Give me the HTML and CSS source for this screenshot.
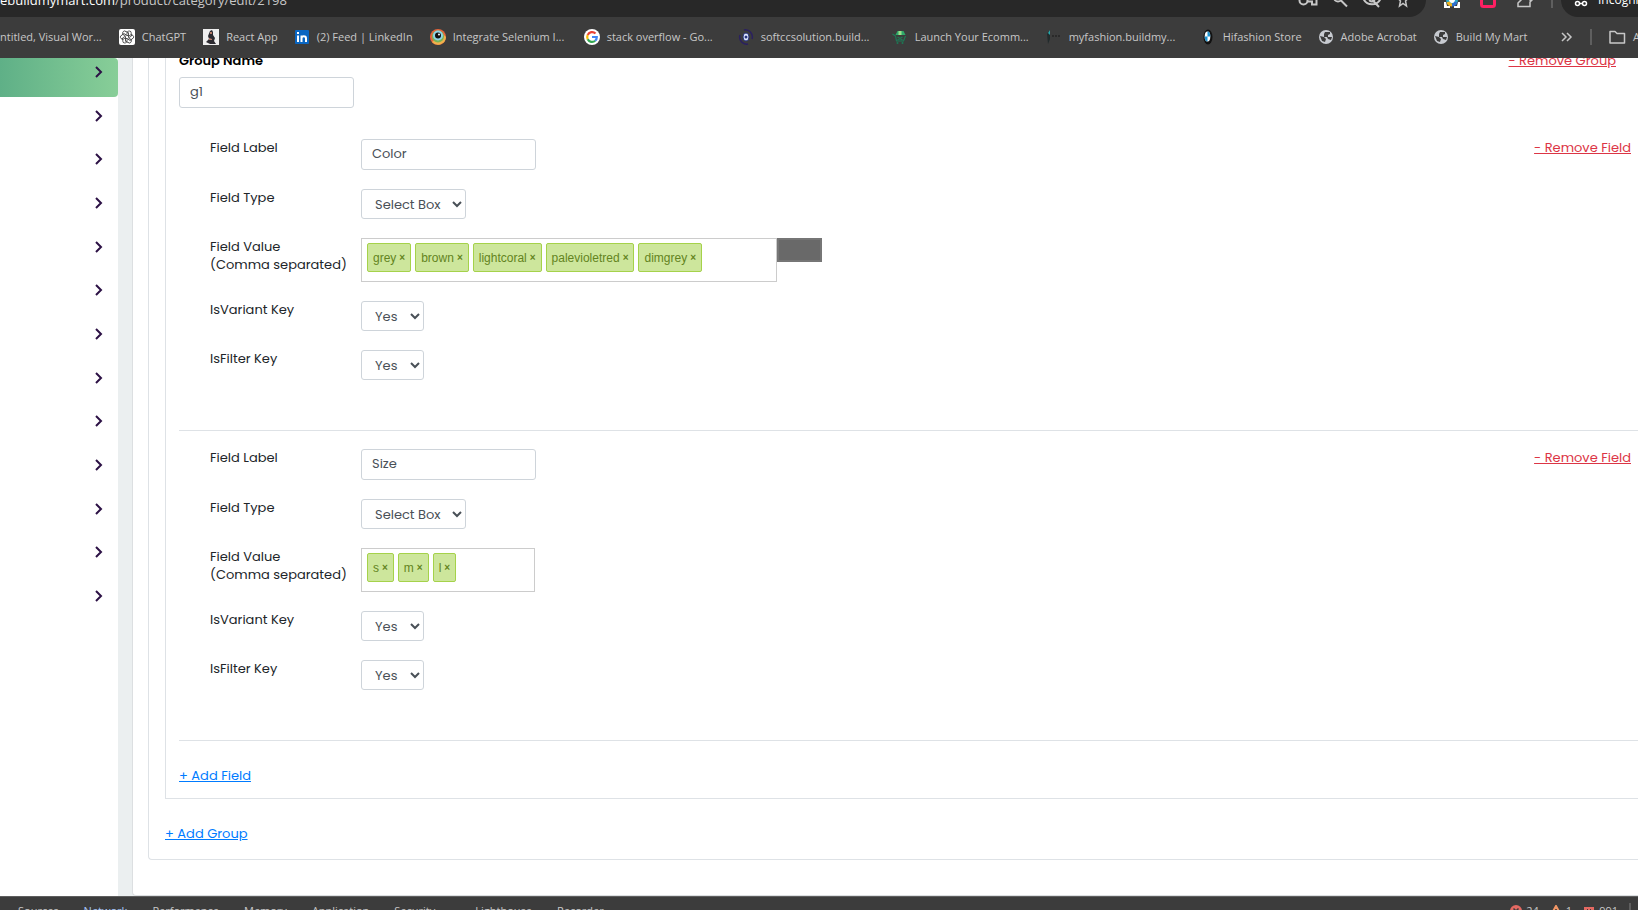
FILE: index.html
```
<!DOCTYPE html>
<html lang="en">
<head>
    <meta charset="UTF-8">
    <meta name="viewport" content="width=device-width, initial-scale=1.0">
    <title>Edit Category</title>
    <link rel="stylesheet" href="styles.css">
</head>
<body>
    <!-- Address bar -->
    <div class="toolbar">
        <div class="omnibox">
            <span class="url"><b>ebuildmymart.com</b>/product/category/edit/2198</span>
            <div class="omnibox-icons">
                <svg width="20" height="16" viewBox="0 0 20 16"><g fill="none" stroke="#c7c7c7" stroke-width="2"><circle cx="5.500" cy="8.500" r="4"/><path d="M9 6.500h9.500v6H14v-3H9"/></g></svg>
                <svg width="16" height="16" viewBox="0 0 16 16"><g fill="none" stroke="#c7c7c7" stroke-width="2"><circle cx="6" cy="5.500" r="4"/><path d="M9 8.500l6 6"/></g></svg>
                <svg width="20" height="16" viewBox="0 0 20 16"><g fill="none" stroke="#c7c7c7" stroke-width="2"><path d="M1.500 7C5 1 15 1 18.500 7 15 14 5 14 1.500 7zM3 0l14 15"/><circle cx="10" cy="7" r="2.500"/></g></svg>
                <svg width="14" height="16" viewBox="0 0 14 16"><path d="M7 2l1.500 4h4L9.500 9l1 5L7 11.500 3.500 14l1-5-3-3h4z" fill="none" stroke="#c7c7c7" stroke-width="1.500"/></svg>
            </div>
        </div>
        <div class="extensions">
            <svg width="16" height="16" viewBox="0 0 16 16"><path d="M0 10v6h6v-2H3l-1-4zM16 10v6h-6v-2h3l1-4z" fill="#fff"/><circle cx="8" cy="8" r="4.500" fill="#fff" stroke="#2aa9c9" stroke-width="3"/><path d="M4 10a4.500 4.500 0 0 0 4 3" fill="none" stroke="#f2b51d" stroke-width="3"/><path d="M8 13a4.500 4.500 0 0 0 4-3" fill="none" stroke="#2f6fd0" stroke-width="3"/></svg>
            <svg width="16" height="16" viewBox="0 0 16 16"><rect x="1.500" y="1.500" width="13" height="13" rx="2" fill="#3c3c3c" stroke="#ff1f63" stroke-width="3"/></svg>
            <svg width="18" height="16" viewBox="0 0 18 16"><path d="M2 14.500V11l3-3-2-4h11v4h2l-2 2v4.500z" fill="none" stroke="#c7c7c7" stroke-width="1.500"/></svg>
            <span class="divider"></span>
        </div>
        <div class="incognito">
            <svg width="14" height="16" viewBox="0 0 14 16"><g fill="none" stroke="#fff" stroke-width="1.500"><circle cx="3.500" cy="11.500" r="2"/><circle cx="10.500" cy="11.500" r="2"/><path d="M5.500 11.500h3M1 6h12"/></g></svg>
            <span>Incognito</span>
        </div>
    </div>

    <!-- Bookmarks -->
    <nav class="bookmarks">
        <a href="#">ntitled, Visual Wor...</a>
        <a href="#">
            <svg width="16" height="16" viewBox="0 0 16 16"><rect width="16" height="16" rx="2" fill="#fff"/><g fill="none" stroke="#333" stroke-width="0.800"><path d="M8 5.500V3.800a2.300 2.300 0 0 1 4-1L12.500 7 8.500 9.500" transform="rotate(0 8 8)"/><path d="M8 5.500V3.800a2.300 2.300 0 0 1 4-1L12.500 7 8.500 9.500" transform="rotate(60 8 8)"/><path d="M8 5.500V3.800a2.300 2.300 0 0 1 4-1L12.500 7 8.500 9.500" transform="rotate(120 8 8)"/><path d="M8 5.500V3.800a2.300 2.300 0 0 1 4-1L12.500 7 8.500 9.500" transform="rotate(180 8 8)"/><path d="M8 5.500V3.800a2.300 2.300 0 0 1 4-1L12.500 7 8.500 9.500" transform="rotate(240 8 8)"/><path d="M8 5.500V3.800a2.300 2.300 0 0 1 4-1L12.500 7 8.500 9.500" transform="rotate(300 8 8)"/></g></svg>
            <span>ChatGPT</span>
        </a>
        <a href="#">
            <svg width="16" height="16" viewBox="0 0 16 16"><path fill="#eee" d="M0 0h16v16H0z"/><path d="M7 2l2-1 1 2v3l2 3-1 3 2 3H7l-4-2 3-3-1-3z" fill="#2c2a30"/><path d="M7 3h2v2H7zM6 9l3 1v1H6z" fill="#b57b68"/></svg>
            <span>React App</span>
        </a>
        <a href="#">
            <svg width="15" height="16" viewBox="0 0 15 16"><rect y="1" width="14" height="14" rx="1" fill="#0a66c2"/><path d="M3 6.500V13M3 3v2M6.500 6.500V13M6.500 9.500c0-3 4.500-3 4.500 0V13" fill="none" stroke="#fff" stroke-width="2"/></svg>
            <span>(2) Feed | LinkedIn</span>
        </a>
        <a class="long" href="#">
            <svg width="16" height="16" viewBox="0 0 16 16"><circle cx="8" cy="8" r="8" fill="#e5643a"/><path d="M2 13a8 8 0 0 0 14-5l-4-4z" fill="#efb04c"/><circle cx="8" cy="7.500" r="6" fill="#78b356"/><circle cx="8" cy="6.500" r="5" fill="#8ed3e6"/><circle cx="8" cy="6.500" r="3" fill="#111"/><circle cx="9" cy="5.500" r="1" fill="#fff"/></svg>
            <span>Integrate Selenium I...</span>
        </a>
        <a class="long" href="#">
            <svg width="16" height="16" viewBox="0 0 16 16"><circle cx="8" cy="8" r="8" fill="#fff"/><g fill="none" stroke-width="2.200"><path d="M11.500 4.500A4.800 4.800 0 0 0 3.700 6" stroke="#ea4335"/><path d="M3.700 6a4.800 4.800 0 0 0 0 4.200" stroke="#fbbc05"/><path d="M3.700 10.200a4.800 4.800 0 0 0 7.500 1.500" stroke="#34a853"/><path d="M11.200 11.700A4.800 4.800 0 0 0 12.800 8H8" stroke="#4285f4"/></g></svg>
            <span>stack overflow - Go...</span>
        </a>
        <a class="long" href="#">
            <svg width="16" height="16" viewBox="0 0 16 16"><path d="M6 1a7 7 0 0 1 8 9M10 15a7 7 0 0 1-8-9" fill="none" stroke="#2a2060" stroke-width="1.500"/><ellipse cx="8" cy="8" rx="3" ry="4" fill="#dfe8ff" stroke="#28337c"/><circle cx="8" cy="8" r="1.500" fill="#28337c"/></svg>
            <span>softccsolution.build...</span>
        </a>
        <a class="long" href="#">
            <svg width="16" height="16" viewBox="0 0 15 16"><path d="M3 6l2-4h6l2 4z" fill="#2fa86a"/><path d="M6 2h3v4H6z" fill="#9be08a"/><path d="M0 5l3 2 1 5h7l2-5M5 8l5 3M10 8l-5 3" fill="none" stroke="#1d7a56" stroke-width="1.200"/><circle cx="5" cy="14" r="1" fill="#1d7a56"/><circle cx="10" cy="14" r="1" fill="#1d7a56"/></svg>
            <span>Launch Your Ecomm...</span>
        </a>
        <a class="long" href="#">
            <svg width="16" height="16" viewBox="0 0 16 16"><path d="M1 5l3-4v9l-2 5z" fill="#222b2c"/><path d="M2 4l2-3v5z" fill="#26a9ad"/><path d="M6 7h9" stroke="#2a2a2a" stroke-width="2" stroke-dasharray="2 1"/></svg>
            <span>myfashion.buildmy...</span>
        </a>
        <a href="#">
            <svg width="16" height="16" viewBox="0 0 16 16"><ellipse cx="8" cy="8" rx="4.500" ry="7.500" fill="#111"/><ellipse cx="7.500" cy="7.500" rx="2.800" ry="5" fill="#fff"/><path d="M7.500 2.500a2.800 5 0 0 1 2.800 5H7.500zM7.500 12.500a2.800 5 0 0 1-2.800-5h2.800z" fill="#1c92cf"/></svg>
            <span>Hifashion Store</span>
        </a>
        <a href="#">
            <svg width="15" height="16" viewBox="0 0 15 16"><circle cx="7" cy="8" r="7" fill="#c7cad0"/><path d="M1 7l4 1 2 2-1 3-3-1zM6 3h5v2l-2 1v2h4l-1 3-3-1-1-2H5V5z" fill="#3c3c3c"/></svg>
            <span>Adobe Acrobat</span>
        </a>
        <a href="#">
            <svg width="15" height="16" viewBox="0 0 15 16"><circle cx="7" cy="8" r="7" fill="#c7cad0"/><path d="M1 7l4 1 2 2-1 3-3-1zM6 3h5v2l-2 1v2h4l-1 3-3-1-1-2H5V5z" fill="#3c3c3c"/></svg>
            <span>Build My Mart</span>
        </a>
        <div class="bookmarks-end">
            <button class="more" type="button" aria-label="More bookmarks">
                <svg width="12" height="12" viewBox="0 0 12 12"><path d="M1 2l4 4-4 4M6 2l4 4-4 4" fill="none" stroke="#c7c7c7" stroke-width="1.500"/></svg>
            </button>
            <span class="divider"></span>
            <a href="#">
                <svg width="17" height="16" viewBox="0 0 17 16"><path d="M1 2.500h5l2 2h7.500v9.500H1z" fill="none" stroke="#c7c7c7" stroke-width="1.500" stroke-linejoin="round"/></svg>
                <span>All Bookmarks</span>
            </a>
        </div>
    </nav>

    <div class="page">
        <!-- Sidebar, only the arrows are in view -->
        <nav class="sidebar">
            <ul>
                <li><a class="active" href="#" aria-label="Expand menu"><svg class="arrow" viewBox="0 0 8 12"><path d="M1 1l5 5-5 5"/></svg></a></li>
                <li><a href="#" aria-label="Expand menu"><svg class="arrow" viewBox="0 0 8 12"><path d="M1 1l5 5-5 5"/></svg></a></li>
                <li><a href="#" aria-label="Expand menu"><svg class="arrow" viewBox="0 0 8 12"><path d="M1 1l5 5-5 5"/></svg></a></li>
                <li><a href="#" aria-label="Expand menu"><svg class="arrow" viewBox="0 0 8 12"><path d="M1 1l5 5-5 5"/></svg></a></li>
                <li><a href="#" aria-label="Expand menu"><svg class="arrow" viewBox="0 0 8 12"><path d="M1 1l5 5-5 5"/></svg></a></li>
                <li><a href="#" aria-label="Expand menu"><svg class="arrow" viewBox="0 0 8 12"><path d="M1 1l5 5-5 5"/></svg></a></li>
                <li><a href="#" aria-label="Expand menu"><svg class="arrow" viewBox="0 0 8 12"><path d="M1 1l5 5-5 5"/></svg></a></li>
                <li><a href="#" aria-label="Expand menu"><svg class="arrow" viewBox="0 0 8 12"><path d="M1 1l5 5-5 5"/></svg></a></li>
                <li><a href="#" aria-label="Expand menu"><svg class="arrow" viewBox="0 0 8 12"><path d="M1 1l5 5-5 5"/></svg></a></li>
                <li><a href="#" aria-label="Expand menu"><svg class="arrow" viewBox="0 0 8 12"><path d="M1 1l5 5-5 5"/></svg></a></li>
                <li><a href="#" aria-label="Expand menu"><svg class="arrow" viewBox="0 0 8 12"><path d="M1 1l5 5-5 5"/></svg></a></li>
                <li><a href="#" aria-label="Expand menu"><svg class="arrow" viewBox="0 0 8 12"><path d="M1 1l5 5-5 5"/></svg></a></li>
                <li><a href="#" aria-label="Expand menu"><svg class="arrow" viewBox="0 0 8 12"><path d="M1 1l5 5-5 5"/></svg></a></li>
            </ul>
        </nav>

        <main class="card">
            <form class="groups">
                <section class="group">
                    <div class="group-head">
                        <label for="groupName">Group Name</label>
                        <a class="remove" href="#">- Remove Group</a>
                    </div>
                    <input class="form-control" type="text" id="groupName" value="g1">

                    <div class="fields">
                        <div class="field">
                            <div class="field-rows">
                                <div class="row">
                                    <label for="label1">Field Label</label>
                                    <input class="form-control" type="text" id="label1" value="Color">
                                </div>
                                <div class="row">
                                    <label for="type1">Field Type</label>
                                    <select class="form-control type-select" id="type1"><option>Select Box</option></select>
                                </div>
                                <div class="row">
                                    <label for="value1">Field Value<br>(Comma separated)</label>
                                    <div class="tags wide">
                                        <span class="tag">grey<button type="button" aria-label="Remove grey">×</button></span>
                                        <span class="tag">brown<button type="button" aria-label="Remove brown">×</button></span>
                                        <span class="tag">lightcoral<button type="button" aria-label="Remove lightcoral">×</button></span>
                                        <span class="tag">palevioletred<button type="button" aria-label="Remove palevioletred">×</button></span>
                                        <span class="tag">dimgrey<button type="button" aria-label="Remove dimgrey">×</button></span>
                                        <input type="text" id="value1">
                                    </div>
                                    <input class="color-box" type="text" aria-label="Picked color" readonly>
                                </div>
                                <div class="row">
                                    <label for="variant1">IsVariant Key</label>
                                    <select class="form-control yes-select" id="variant1"><option>Yes</option><option>No</option></select>
                                </div>
                                <div class="row">
                                    <label for="filter1">IsFilter Key</label>
                                    <select class="form-control yes-select" id="filter1"><option>Yes</option><option>No</option></select>
                                </div>
                            </div>
                            <a class="remove" href="#">- Remove Field</a>
                        </div>

                        <div class="field">
                            <div class="field-rows">
                                <div class="row">
                                    <label for="label2">Field Label</label>
                                    <input class="form-control" type="text" id="label2" value="Size">
                                </div>
                                <div class="row">
                                    <label for="type2">Field Type</label>
                                    <select class="form-control type-select" id="type2"><option>Select Box</option></select>
                                </div>
                                <div class="row">
                                    <label for="value2">Field Value<br>(Comma separated)</label>
                                    <div class="tags">
                                        <span class="tag">s<button type="button" aria-label="Remove s">×</button></span>
                                        <span class="tag">m<button type="button" aria-label="Remove m">×</button></span>
                                        <span class="tag">l<button type="button" aria-label="Remove l">×</button></span>
                                        <input type="text" id="value2">
                                    </div>
                                </div>
                                <div class="row">
                                    <label for="variant2">IsVariant Key</label>
                                    <select class="form-control yes-select" id="variant2"><option>Yes</option><option>No</option></select>
                                </div>
                                <div class="row">
                                    <label for="filter2">IsFilter Key</label>
                                    <select class="form-control yes-select" id="filter2"><option>Yes</option><option>No</option></select>
                                </div>
                            </div>
                            <a class="remove" href="#">- Remove Field</a>
                        </div>
                    </div>
                    <a class="add" href="#">+ Add Field</a>
                </section>
                <a class="add" href="#">+ Add Group</a>
            </form>
        </main>
    </div>

    <!-- Devtools tabs -->
    <div class="devtools">
        <div class="tabs">
            <a href="#">Sources</a>
            <a class="current" href="#">Network</a>
            <a href="#">Performance</a>
            <a href="#">Memory</a>
            <a href="#">Application</a>
            <a class="wide-tab" href="#">Security</a>
            <a href="#">Lighthouse</a>
            <a href="#">Recorder</a>
        </div>
        <div class="counts">
            <span><svg width="12" height="12" viewBox="0 0 12 12"><circle cx="6" cy="6" r="6" fill="#e46962"/><path d="M3.500 3.500l5 5M8.500 3.500l-5 5" stroke="#3c3c3c" stroke-width="1.500"/></svg>24</span>
            <span><svg width="12" height="12" viewBox="0 0 12 12"><path d="M6 1l5 9H1z" fill="none" stroke="#f29766" stroke-width="2"/></svg>1</span>
            <span><svg width="12" height="12" viewBox="0 0 12 12"><path d="M1 2h10v8H5l-4 2z" fill="#e46962"/><path d="M4 4l4 4M8 4L4 8" stroke="#3c3c3c"/></svg>991</span>
            <span class="divider"></span>
        </div>
    </div>
</body>
</html>
```

FILE: styles.css
```
* {
    margin: 0;
    padding: 0;
    box-sizing: border-box;
}

body {
    display: flex;
    flex-direction: column;
    height: 100vh;
    overflow: hidden;
    background: #3c3c3c;
    font-family: Poppins, Inter, sans-serif;
    font-size: 13px;
    line-height: 18px;
    color: #212529;
}

svg {
    flex: none;
}

.divider {
    flex: none;
    width: 2px;
    height: 16px;
    background: #5f5f5f;
}

/* Browser bars */
.toolbar,
.bookmarks,
.devtools {
    display: flex;
    flex: none;
    align-items: center;
    font-family: "Segoe UI", "Open Sans", sans-serif;
    font-size: 11px;
    color: #c7c7c7;
    white-space: nowrap;
    overflow: hidden;
}

/* upper half is scrolled off the top */
.toolbar {
    height: 34px;
    margin-top: -17px;
}

.omnibox {
    display: flex;
    flex: 1;
    align-items: center;
    justify-content: space-between;
    height: 34px;
    padding-right: 16px;
    border-radius: 0 17px 17px 0;
    background: #282828;
    font-size: 13px;
}

.omnibox b {
    font-weight: normal;
    color: #fff;
}

.omnibox-icons {
    display: flex;
    gap: 14px;
}

.extensions {
    display: flex;
    align-items: center;
    gap: 20px;
    padding: 0 8px 0 18px;
}

.extensions .divider {
    margin-left: -3px;
}

.incognito {
    display: flex;
    align-items: center;
    gap: 10px;
    width: 77px;
    height: 34px;
    padding-left: 13px;
    border-radius: 17px 0 0 17px;
    background: #282828;
    font-size: 12px;
    color: #fff;
    overflow: hidden;
}

.bookmarks {
    height: 41px;
    padding-bottom: 2px;
    gap: 17px;
}

.bookmarks a {
    display: flex;
    flex: none;
    align-items: center;
    gap: 7px;
    color: #c7c7c7;
    text-decoration: none;
}

/* long titles are all cut to the same width */
.bookmarks .long {
    width: 137px;
}

.bookmarks-end {
    display: flex;
    flex: none;
    align-items: center;
    gap: 17px;
    width: 77px;
    margin-left: auto;
}

.more {
    display: flex;
    border: none;
    background: none;
}

/* Page */
.page {
    display: flex;
    flex: 1;
    min-height: 0;
    overflow: hidden;
    background: #ebeff0;
}

.sidebar {
    flex: none;
    width: 118px;
    background: #fff;
}

.sidebar ul {
    display: flex;
    flex-direction: column;
    height: 568px;
    margin-top: -8px;
    list-style: none;
}

.sidebar li {
    flex: 1;
    min-height: 0;
}

.sidebar a {
    display: flex;
    align-items: center;
    justify-content: flex-end;
    height: 100%;
    padding-right: 15px;
}

.sidebar .active {
    height: 39px;
    margin-top: 8px;
    padding-bottom: 11px;
    border-radius: 0 4px 4px 0;
    background: linear-gradient(90deg, #5fb087, #88ce98);
}

.arrow {
    width: 8px;
    height: 12px;
    fill: none;
    stroke: #2c1145;
    stroke-width: 2;
}

.card {
    flex: 1;
    align-self: flex-start;
    margin-left: 14px;
    padding: 0 0 35px 15px;
    border: 1px solid #dcdfe1;
    border-width: 0 0 1px 1px;
    border-radius: 0 0 0 4px;
    background: #fff;
}

.groups {
    padding: 0 0 16px 16px;
    border: 1px solid #dee2e6;
    border-width: 0 0 1px 1px;
    border-radius: 0 0 0 4px;
}

.group {
    margin: -6px 0 26px;
    padding: 0 0 13px 13px;
    border: 1px solid #dee2e6;
    border-width: 0 0 1px 1px;
}

.group-head {
    display: flex;
    justify-content: space-between;
    margin-bottom: 7px;
    padding-right: 22px;
}

.group-head label {
    font-weight: 600;
    color: #000;
}

.remove {
    color: #dc3545;
}

.add {
    display: table;
    color: #007bff;
}

.form-control {
    display: block;
    width: 175px;
    height: 31px;
    padding: 0 10px 1px;
    border: 1px solid #ced4da;
    border-radius: 3px;
    background: #fff;
    font: inherit;
    color: #495057;
}

select.form-control {
    height: 30px;
    padding: 0 0 0 9px;
}

select.type-select {
    width: 105px;
}

select.yes-select {
    width: 63px;
}

.fields {
    margin: 13px 0 26px;
}

.field {
    display: flex;
    justify-content: space-between;
    padding: 18px 7px 50px 31px;
    border-bottom: 1px solid #dee2e6;
}

.field-rows {
    display: flex;
    flex-direction: column;
    gap: 19px;
}

.row {
    display: flex;
    align-items: flex-start;
}

.row label {
    width: 151px;
}

/* Tag input */
.tags {
    display: flex;
    align-items: flex-start;
    gap: 4px;
    width: 174px;
    height: 44px;
    padding: 4px 5px;
    border: 1px solid #ccc;
}

.tags.wide {
    width: 416px;
}

.tag {
    display: flex;
    align-items: center;
    gap: 3px;
    height: 29px;
    padding: 0 5px;
    border: 1px solid #a5d24a;
    border-radius: 2px;
    background: #cde69c;
    font-family: Helvetica, "Liberation Sans", sans-serif;
    font-size: 12px;
    color: #638421;
}

.tag button {
    border: none;
    background: none;
    font: bold 10px "Liberation Sans", sans-serif;
    color: #638421;
    cursor: pointer;
}

.tags input {
    flex: 1;
    min-width: 0;
    height: 29px;
    border: none;
    outline: none;
    background: transparent;
}

.color-box {
    width: 45px;
    height: 24px;
    border: 2px solid #767676;
    background: #696969;
}

/* Devtools strip, lower half is below the window */
.devtools {
    justify-content: space-between;
    height: 29px;
    margin-bottom: -15px;
    padding: 0 7px 0 18px;
    border-top: 1px solid #5e5e5e;
}

.tabs,
.counts {
    display: flex;
    align-items: center;
    gap: 25px;
}

.tabs a {
    color: #c7c7c7;
    text-decoration: none;
}

.tabs .current {
    color: #a8c7fa;
}

.tabs .wide-tab {
    margin-right: 15px;
}

.counts {
    gap: 11px;
}

.counts span {
    display: flex;
    align-items: center;
    gap: 4px;
}
```
